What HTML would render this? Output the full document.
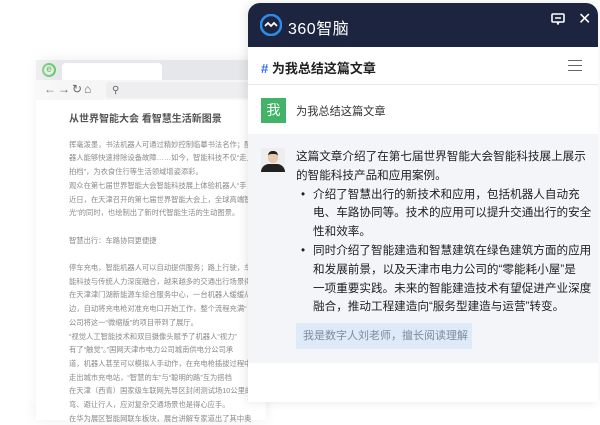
<!DOCTYPE html>
<html><head><meta charset="utf-8"><style>
*{margin:0;padding:0;box-sizing:border-box}
body{width:600px;height:402px;overflow:hidden;background:#fff;font-family:"Liberation Sans","Noto Sans CJK SC",sans-serif;position:relative}
.bw{position:absolute;left:36px;top:60px;width:230px;height:360px;background:#fff;box-shadow:0 0 12px rgba(0,0,0,.08)}
.tabbar{height:20px;background:#e6e7ea;position:relative}
.tab{position:absolute;left:26px;top:3px;width:100px;height:17px;background:#fff;border-radius:4px 4px 0 0}
.tool{height:20px;background:#f6f6f7;position:relative;font-size:12px;color:#666}
.art{padding:13px 0 0 33px;color:#8a8a8a;font-size:7.3px;line-height:13.7px;white-space:nowrap}
.art h1{font-size:10px;color:#555;font-weight:bold;margin-bottom:11px}
.fade{position:absolute;left:0;top:0;width:60px;height:402px;background:linear-gradient(90deg,rgba(255,255,255,.9),rgba(255,255,255,0))}
.p{position:absolute;left:248px;top:3px;width:350px;height:399px;background:#fff;border-radius:12px 12px 0 0;overflow:hidden;box-shadow:-2px 0 10px rgba(0,0,0,.1)}
.hd{height:44px;background:#1c2440;position:relative;color:#fff}
.ti{height:38px;border-bottom:1px solid #e8e8ec;position:relative;font-size:13px;font-weight:bold;color:#222;padding:11px 0 0 13px}
.u{height:49px;position:relative;font-size:11.2px;color:#333}
.g{background:#f4f5f8;height:229px;position:relative;font-size:11.6px;color:#222;line-height:18.8px;white-space:nowrap}
</style></head><body>
<div class="bw">
 <div class="tabbar"><div class="tab"></div>
  <div style="position:absolute;left:6px;top:3px;width:14px;height:14px;border-radius:50%;border:2.5px solid #5cc45c;color:#5cc45c;font-size:10px;line-height:9px;text-align:center;font-weight:bold">e</div></div>
 <div class="tool"><span style="position:absolute;left:8px;top:2px;letter-spacing:2px">←→↻⌂</span><div style="position:absolute;left:70px;top:2px;right:0;height:16px;background:#eeeef0;border-radius:3px"><span style="margin-left:6px;font-size:10px">⚲</span></div></div>
 <div class="art"><h1>从世界智能大会 看智慧生活新图景</h1>
挥毫泼墨，书法机器人可通过精妙控制临摹书法名作；配<br>器人能够快速排除设备故障……如今，智能科技不仅“走上<br>拍档”，为衣食住行等生活领域增姿添彩。<br>观众在第七届世界智能大会智能科技展上体验机器人“手<br>近日，在天津召开的第七届世界智能大会上，全球高端智能<br>光”的同时，也绘制出了新时代智能生活的生动图景。<br><br>智慧出行：车路协同更便捷<br><br>停车充电，智能机器人可以自动提供服务；路上行驶，车<br>能科技与传统人力深度融合，越来越多的交通出行场景得<br>在天津津门湖新能源车综合服务中心，一台机器人缓缓从<br>边，自动将充电枪对准充电口开始工作，整个流程充满“<br>公司将这一“微缩版”的项目带到了展厅。<br>“视觉人工智能技术和双目摄像头赋予了机器人“视力”<br>有了“触觉”。”国网天津市电力公司城南供电分公司承<br>道，机器人甚至可以模拟人手动作，在充电枪插拔过程中<br>走出城市充电站，“智慧的车”与“聪明的路”互为搭档<br>在天津（西青）国家级车联网先导区封闭测试场10公里的<br>弯、避让行人，应对复杂交通场景也是得心应手。<br>在华为展区智能网联车板块，展台讲解专家道出了其中奥</div>
</div>
<div class="fade"></div>
<div class="p">
 <div class="hd">
  <svg style="position:absolute;left:12px;top:11px" width="22" height="22" viewBox="0 0 22 22"><circle cx="11" cy="11" r="10" fill="none" stroke="#2b8de8" stroke-width="2.5"/><path d="M5 12l3-3 3 3 3-3 3 3" fill="none" stroke="#fff" stroke-width="1.8"/></svg>
  <span style="position:absolute;left:40px;top:12px;font-size:16px;letter-spacing:.5px">360智脑</span>
  <svg style="position:absolute;left:303px;top:10px" width="14" height="12" viewBox="0 0 14 12"><rect x="1" y="1" width="12" height="8" rx="1" fill="none" stroke="#fff" stroke-width="1.6"/><path d="M4 5h6M6 9l1 2 1-2" stroke="#fff" stroke-width="1.4" fill="none"/></svg>
  <span style="position:absolute;left:330px;top:6px;font-size:16px">✕</span>
 </div>
 <div class="ti"><span style="color:#2b6ef0">#</span> 为我总结这篇文章
  <div style="position:absolute;left:320px;top:13px;width:14px;height:11px;border-top:1.5px solid #666;border-bottom:1.5px solid #666"><div style="margin-top:3.5px;border-top:1.5px solid #666"></div></div></div>
 <div class="u"><div style="position:absolute;left:13px;top:13px;width:25px;height:25px;background:#43b36a;color:#fff;font-size:14px;text-align:center;line-height:25px">我</div><span style="position:absolute;left:48px;top:18px">为我总结这篇文章</span></div>
 <div class="g">
  <div style="position:absolute;left:13px;top:14px;width:24px;height:24px;background:#eee;overflow:hidden"><div style="width:10px;height:12px;background:#e9c9b0;border-radius:40%;margin:3px auto 0;border-top:3px solid #222"></div><div style="width:24px;height:8px;background:#222;border-radius:8px 8px 0 0;margin-top:1px"></div></div>
  <div style="position:absolute;left:48px;top:14px;width:300px">这篇文章介绍了在第七届世界智能大会智能科技展上展示<br>的智能科技产品和应用案例。
   <div style="padding-left:17px;position:relative">
    <div style="position:absolute;left:5px">•</div>介绍了智慧出行的新技术和应用，包括机器人自动充<br>电、车路协同等。技术的应用可以提升交通出行的安全<br>性和效率。
    <div style="position:relative"><div style="position:absolute;left:-12px">•</div>同时介绍了智能建造和智慧建筑在绿色建筑方面的应用<br>和发展前景，以及天津市电力公司的“零能耗小屋”是<br>一项重要实践。未来的智能建造技术有望促进产业深度<br>融合，推动工程建造向“服务型建造与运营”转变。</div>
   </div>
  </div>
  <div style="position:absolute;left:48px;top:189px;width:176px;height:26px;background:#dfeaf8;color:#7d8ba0;font-size:11px;line-height:26px;padding-left:7px">我是数字人刘老师，擅长阅读理解</div>
 </div>
</div>
</body></html>
